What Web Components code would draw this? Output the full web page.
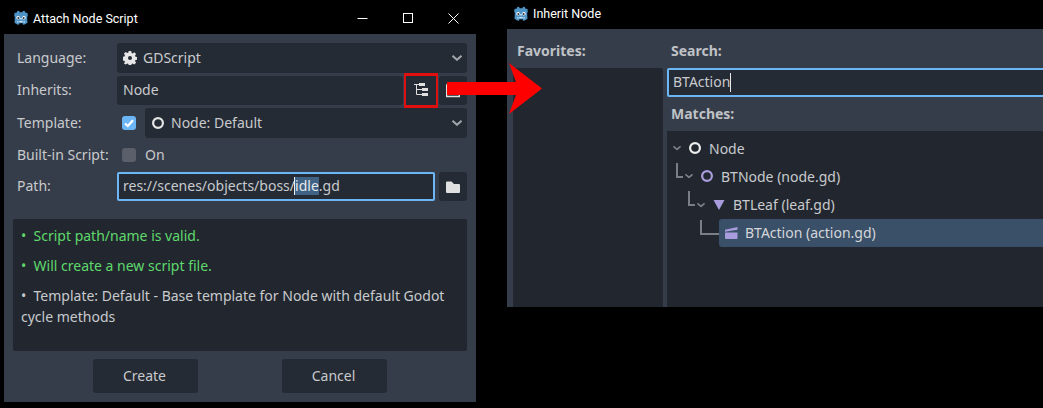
<!DOCTYPE html>
<html><head><meta charset="utf-8"><title>Godot dialogs</title>
<style>
html,body{margin:0;padding:0;background:#000;overflow:hidden;width:1043px;height:408px}
body{position:relative;font:14px/21px "Noto Sans",sans-serif;color:#c8cacd}
.arrow{position:absolute;left:447px;top:63px;width:95px;height:51px}
</style></head><body>
<script>
const css=`:host{box-sizing:border-box}*{box-sizing:border-box}`;
const ICONS={
 logo:`<svg width="16" height="16" viewBox="0 0 16 16"><path fill="#4f94c7" d="M1.500 3l2.300-.6.6-1.700 1.700.3.6 1.300h2.600l.6-1.300 1.700-.3.6 1.700 2.300.6.3 3.200-.7.600.4 5.900-2.800 1.700-1.800.3-.2-1.500H6.300l-.2 1.500-1.800-.3-2.800-1.700.4-5.900-.7-.6z"/><circle cx="5.100" cy="7.800" r="1.800" fill="#fff"/><circle cx="10.900" cy="7.800" r="1.800" fill="#fff"/><circle cx="5.300" cy="7.900" r="1" fill="#333"/><circle cx="10.700" cy="7.900" r="1" fill="#333"/><path fill="#fff" d="M7.400 8h1.200v1.500H7.400zM4 11.200l1.500.3v1h-1zM12 11.200l-1.500.3v1h1zM6.300 11.300h3.400v1H6.300z"/></svg>`,
 gear:`<svg width="14" height="14" viewBox="0 0 14 14"><path fill="#e6e6e6" fill-rule="evenodd" d="M5.700 0h2.600l.3 1.900 1.100.5 1.600-1.100 1.800 1.800-1.100 1.600.5 1.100 1.900.3v2.600l-1.900.3-.5 1.100 1.100 1.600-1.800 1.800-1.600-1.100-1.100.5-.3 1.900H5.700l-.3-1.900-1.100-.5-1.600 1.100L.9 12.600 2 11l-.5-1.100L0 9.600V5.700l1.500-.3L2 4.300.9 2.700l1.800-1.800 1.600 1.100 1.100-.5zM7 5a2 2 0 1 0 0 4 2 2 0 0 0 0-4z"/></svg>`,
 ring:`<svg width="14" height="14" viewBox="0 0 14 14"><circle cx="7" cy="7" r="4.900" fill="none" stroke="currentColor" stroke-width="2.200"/></svg>`,
 tri:`<svg width="14" height="14" viewBox="0 0 14 14"><path fill="currentColor" d="M1.500 2h11L7 12z"/></svg>`,
 clap:`<svg width="14" height="14" viewBox="0 0 14 14"><path fill="currentColor" d="M1 6.500h12.500v5.500a1 1 0 0 1-1 1H2a1 1 0 0 1-1-1zM1 3.800l12.500-2.800v2.700L1 5.700z"/></svg>`,
 chev:`<svg width="10" height="6" viewBox="0 0 10 6"><path fill="none" stroke="currentColor" stroke-width="2" d="M.5.800 5 4.800 9.500.800"/></svg>`,
 tree:`<svg width="14" height="14" viewBox="0 0 14 14" style="margin-bottom:1px"><path fill="none" stroke="#e0e0e0" d="M0 1.500h5M2.500 1.500v10H8M2.500 6.500H8"/><path fill="#e0e0e0" d="M5 0h6v3H5zM8 5h6v3H8zM8 10h6v3H8z"/></svg>`,
 load:`<svg width="14" height="14" viewBox="0 0 14 14"><path fill="none" stroke="#e0e0e0" stroke-width="1.400" d="M.7 1h12.600v11.500H.7z"/></svg>`,
 folder:`<svg width="14" height="12" viewBox="0 0 14 12"><path fill="#e0e0e0" d="M0 1.500A1 1 0 0 1 1 .5h4.500L8 3h5a1 1 0 0 1 1 1v7a1 1 0 0 1-1 1H1a1 1 0 0 1-1-1z"/></svg>`
};
function def(name,render){customElements.define(name,class extends HTMLElement{connectedCallback(){if(this.shadowRoot)return;const s=this.attachShadow({mode:'open'});s.innerHTML=render(this)}})}
def('app-window',h=>`<style>${css}:host{position:absolute;display:block;left:var(--x);top:0;width:var(--w)}
.bar{display:flex;align-items:center;height:var(--bar);padding-left:var(--tx);padding-bottom:var(--pb);font:12.5px Roboto,sans-serif;color:#fff;gap:4px}
.ctl{margin-left:auto;display:flex;width:102px;height:100%;align-items:center;margin-right:17px;justify-content:space-between}
.body{background:#363d4a;margin-left:var(--ml);margin-top:var(--mt,0);height:var(--h)}</style>
<div class="bar">${ICONS.logo}<span>${h.getAttribute('title-text')}</span>${h.hasAttribute('controls')?`<div class="ctl"><svg width="11" height="11" viewBox="0 0 11 11"><path d="M.5 5.500h10" stroke="#fff"/></svg><svg width="11" height="11" viewBox="0 0 11 11"><rect x=".5" y=".5" width="9" height="9" fill="none" stroke="#fff"/></svg><svg width="11" height="11" viewBox="0 0 11 11"><path d="M.5.500l10 10M10.500.500l-10 10" stroke="#fff"/></svg></div>`:''}</div><div class="body"><slot></slot></div>`);
def('g-box',h=>`<style>${css}:host{display:flex;align-items:center;height:var(--bh,29px);background:#252b34;border-radius:3px;padding-left:6px;gap:6px;flex:1;min-width:0;color:#c8cacd}
.t{margin-bottom:2px}.ic{display:flex;color:#e6e6e6}.c{margin-left:auto;margin-right:5px;color:#a2a5aa;display:flex}:host([drop]){height:30px}</style>
${h.getAttribute('icon')?`<span class="ic">${ICONS[h.getAttribute('icon')]}</span>`:''}<span class="t"><slot></slot></span>${h.hasAttribute('drop')?`<span class="c">${ICONS.chev}</span>`:''}`);
def('g-edit',h=>`<style>${css}:host{display:flex;align-items:center;height:var(--eh,29px);background:#252b34;border:2px solid #6db6f5;border-radius:2px;padding-left:4px;flex:1;white-space:pre;min-width:0;color:#c8cacd}.t{display:block;margin-bottom:2px}</style><span class="t"><slot></slot></span>`);
def('g-iconbtn',h=>`<style>${css}:host{display:flex;align-items:center;justify-content:center;width:var(--iw,28px);height:29px;background:#252b34;border-radius:3px;flex:none}</style>${ICONS[h.getAttribute('icon')]}`);
def('g-check',h=>`<style>${css}:host{display:block;width:14px;height:14px;border-radius:3px;background:${h.hasAttribute('on')?'#6db6f5':'#5a5f69'};flex:none}svg{display:block}</style>${h.hasAttribute('on')?'<svg width="14" height="14" viewBox="0 0 14 14"><path d="M3 7.500 5.800 10 11 4.300" fill="none" stroke="#fff" stroke-width="2.200"/></svg>':''}`);
def('g-row',h=>`<style>${css}:host{display:flex;align-items:center;height:var(--rh);gap:0}.l{width:104px;padding-left:4px;flex:none;margin-bottom:2px}.f{flex:1;display:flex;align-items:center;min-width:0}</style><span class="l">${h.getAttribute('label')}</span><div class="f"><slot></slot></div>`);
def('g-btn',h=>`<style>${css}:host{display:flex;align-items:center;justify-content:center;width:105px;height:34px;background:#252b34;border-radius:3px;color:#c8cacd;padding:0 2px 2px 0}</style><slot></slot>`);
def('g-note',h=>`<style>${css}:host{display:block;margin-bottom:9px;color:var(--c,#c8cacd);white-space:pre-wrap}</style><slot></slot>`);
def('tree-row',h=>{const lvl=+h.getAttribute('level')||0,sel=h.hasAttribute('selected');
 const pad=lvl?(lvl-1)*12+6:5;
 return `<style>${css}:host{display:flex;align-items:center;height:var(--th,28px);padding-left:${pad}px;color:#c8cacd;white-space:pre}
 .con{width:7px;height:15px;border-left:2px solid #7a7e85;border-bottom:2px solid #7a7e85;align-self:flex-start;margin-left:3px;flex:none;margin-top:1px}
 .chev{display:flex;color:#7d8187;transform:scale(.8);width:10px;flex:none;margin-left:${lvl?1:0}px}
 .ic{display:flex;flex:none;margin-left:6px;margin-right:7px;color:${lvl?'#a89cdc':'#eee'}}
 .long{width:19px}
 .sel{display:flex;align-items:center;flex:1;height:100%;background:#3a5068;border-radius:3px 0 0 3px;padding-left:5px;color:#d4d6d9}
 .sel .ic{margin:0 7px 0 0;}.st{margin-bottom:2px}</style>${sel?`<span class="con long"></span><div class="sel"><span class="ic">${ICONS[h.getAttribute('icon')]}</span><span class="st"><slot></slot></span></div>`:`${lvl?'<span class="con"></span>':''}<span class="chev">${ICONS.chev}</span><span class="ic">${ICONS[h.getAttribute('icon')]}</span><slot></slot>`}`});
def('attach-dialog',()=>`<style>${css}:host{display:flex;flex-direction:column;height:100%;padding:9px}
.rows{display:flex;flex-direction:column;gap:3px}
.gap4{display:flex;gap:3px;flex:1;align-items:center;min-width:0}
.gap5{gap:4px}
.hl{border-radius:0;--iw:30px;box-shadow:0 1px 0 2px #e01010,0 -1px 0 2px #e01010}
.tpl{display:flex;flex:1;align-items:center;gap:9px;padding-left:5px}
.on{display:flex;align-items:center;gap:9px;padding-left:5px}
.on span{margin-bottom:2px}
.s{background:#3f6285;color:#e6e8ea;display:inline-block;position:relative;height:18px;line-height:18px}
.s::before{content:"";position:absolute;left:-1px;top:0;width:1px;height:18px;background:#eee}
.info{margin-top:18px;height:132px;background:#22272f;border-radius:2px;padding:6px 8px}
.btns{display:flex;justify-content:space-between;margin:8px 80px 0 80px}
</style>
<div class="rows">
<g-row label="Language:" style="--rh:30px"><g-box icon="gear" drop>GDScript</g-box></g-row>
<g-row label="Inherits:" style="--rh:29px"><div class="gap4"><g-box>Node</g-box><g-iconbtn class="hl" icon="tree"></g-iconbtn><g-iconbtn icon="load"></g-iconbtn></div></g-row>
<g-row label="Template:" style="--rh:30px"><div class="tpl"><g-check on></g-check><g-box icon="ring" drop>Node: Default</g-box></div></g-row>
<g-row label="Built-in Script:" style="--rh:28px"><div class="on"><g-check></g-check><span>On</span></div></g-row>
<g-row label="Path:" style="--rh:29px"><div class="gap4 gap5"><g-edit>res://scenes/objects/boss/<span class="s">idle</span>.gd</g-edit><g-iconbtn icon="folder"></g-iconbtn></div></g-row>
</div>
<div class="info">
<g-note style="--c:#5fd96c">•  Script path/name is valid.</g-note>
<g-note style="--c:#5fd96c">•  Will create a new script file.</g-note>
<g-note>•  Template: Default - Base template for Node with default Godot cycle methods</g-note>
</div>
<div class="btns"><g-btn>Create</g-btn><g-btn>Cancel</g-btn></div>`);
def('inherit-dialog',()=>`<style>${css}:host{display:grid;grid-template-columns:150px 1fr;column-gap:4px;height:100%;padding:12px 0 0 6px}
.col{display:flex;flex-direction:column;min-width:0}
h4{margin:0 0 0 4px;font-size:14px;line-height:20px;height:27px;font-weight:700;color:#bfc2c6}
.fav{flex:1;background:#22272f;border-radius:2px 2px 0 0}
.ed{height:29px;display:flex;--eh:29px}
.caret{display:inline-block;width:1px;height:19px;background:#e6e6e6;vertical-align:middle}
.tree{flex:1;background:#22272f;padding-top:3px;--th:28px}
h4.m{height:34px;line-height:34px}
</style>
<div class="col"><h4>Favorites:</h4><div class="fav"></div></div>
<div class="col"><h4>Search:</h4><div class="ed"><g-edit>BTAction<span class="caret"></span></g-edit></div><h4 class="m">Matches:</h4>
<div class="tree"><tree-row level="0" icon="ring">Node</tree-row><tree-row level="1" icon="ring">BTNode (node.gd)</tree-row><tree-row level="2" icon="tri" style="--th:29px">BTLeaf (leaf.gd)</tree-row><tree-row level="3" icon="clap" selected>BTAction (action.gd)</tree-row></div></div>`);
</script>
<app-window title-text="Attach Node Script" controls style="--x:0px;--w:476px;--bar:36px;--pb:0px;--mt:-2px;--tx:13px;--ml:4px;--h:368px"><attach-dialog></attach-dialog></app-window>
<app-window title-text="Inherit Node" style="--x:507px;--w:560px;--bar:29px;--pb:2px;--tx:6px;--ml:0px;--h:278px"><inherit-dialog></inherit-dialog></app-window>
<svg class="arrow" viewBox="447 63 95 51"><path fill="#ff0000" d="M447 82h69l-7-19 33 25.500-33 25.500 7-19h-69z"/></svg>
</body></html>
